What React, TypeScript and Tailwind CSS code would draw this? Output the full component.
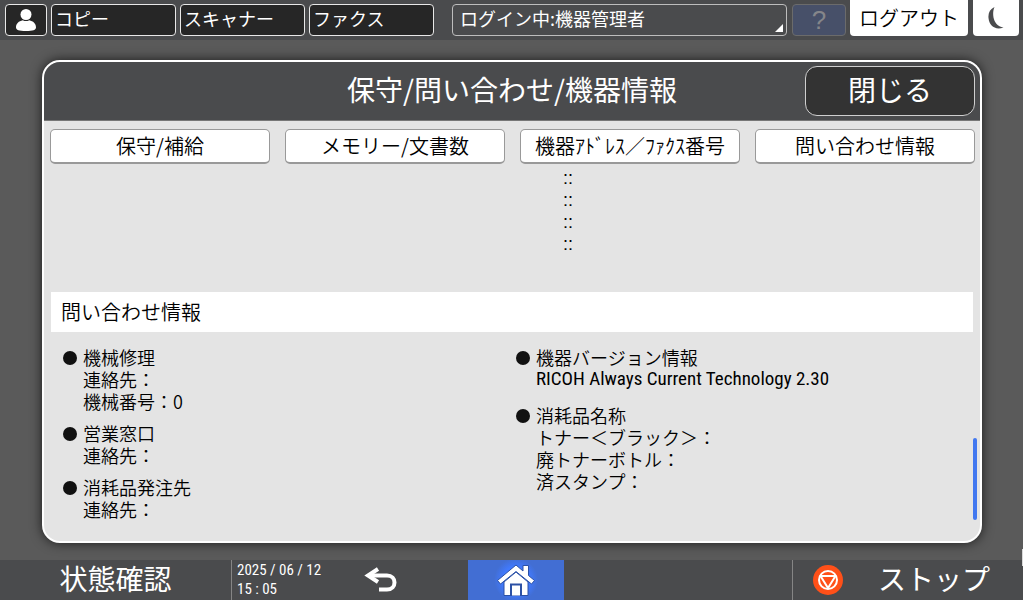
import { useState } from "react";

interface InfoBlock {
  title: string;
  lines: string[];
}

const APPS = ["コピー", "スキャナー", "ファクス"];

const TABS = ["保守/補給", "メモリー/文書数", "機器ｱﾄﾞﾚｽ／ﾌｧｸｽ番号", "問い合わせ情報"];

const CONTACTS: InfoBlock[] = [
  { title: "機械修理", lines: ["連絡先：", "機械番号：0"] },
  { title: "営業窓口", lines: ["連絡先："] },
  { title: "消耗品発注先", lines: ["連絡先："] },
];

const DEVICE: InfoBlock[] = [
  { title: "機器バージョン情報", lines: ["RICOH Always Current Technology 2.30"] },
  { title: "消耗品名称", lines: ["トナー＜ブラック＞：", "廃トナーボトル：", "済スタンプ："] },
];

function InfoList({ blocks, className }: { blocks: InfoBlock[]; className: string }) {
  return (
    <ul className={`flex flex-col ${className}`}>
      {blocks.map((block) => (
        <li key={block.title} className="flex gap-[6px]">
          <span className="mt-[5px] h-[14px] w-[14px] shrink-0 rounded-full bg-[#111111]" />
          <div className="text-[18px] leading-[22px]">
            <h3>{block.title}</h3>
            {block.lines.map((line) => (
              <p key={line} className={line.startsWith("RICOH") ? "font-['Roboto_Condensed',Roboto,sans-serif] text-[19px] font-normal" : ""}>
                {line}
              </p>
            ))}
          </div>
        </li>
      ))}
    </ul>
  );
}

function TopBar() {
  return (
    <header className="flex h-10 shrink-0 items-start bg-[#4a4b4d] pl-[5px] pr-1 text-white">
      <button aria-label="ユーザー" className="mt-1 flex h-8 w-[42px] items-center justify-center rounded border border-[#e8e8e8] bg-[#262626]">
        <svg viewBox="0 0 20 22" className="h-[22px] w-5" fill="currentColor">
          <circle cx="10" cy="5.5" r="5.5" />
          <path d="M0 18.5C0 14.5 2.8 12 6.8 11.2Q10 13 13.2 11.2C17.2 12 20 14.5 20 18.5C20 21 17 22 10 22S0 21 0 18.5Z" />
        </svg>
      </button>
      <nav className="ml-1 mt-1 flex gap-1">
        {APPS.map((app) => (
          <button key={app} className="h-8 w-[125px] rounded border border-[#e8e8e8] bg-[#262626] pb-1 pl-[3px] text-left text-[18px] font-normal leading-[26px]">
            {app}
          </button>
        ))}
      </nav>
      <button className="relative ml-[18px] mt-1 h-8 min-w-0 flex-1 rounded border border-[#bdbdbd] pb-1 pl-[7px] text-left text-[18px] font-normal leading-[26px]">
        ログイン中:機器管理者
        <svg viewBox="0 0 8 8" className="absolute bottom-[3px] right-[3px] h-2 w-2" fill="currentColor">
          <path d="M8 0V8H0Z" />
        </svg>
      </button>
      <button disabled className="ml-[5px] mt-1 h-8 w-[54px] shrink-0 rounded border border-[#6b6b6b] bg-[#475069] font-['Liberation_Sans',sans-serif] text-[26px] font-normal leading-7 text-[#85868a]">
        ?
      </button>
      <button className="ml-1 h-9 w-[118px] shrink-0 rounded-b bg-white text-[20px] leading-9 text-black">ログアウト</button>
      <button aria-label="スリープ" className="ml-[5px] flex h-9 w-[46px] shrink-0 items-center justify-center rounded-b bg-white text-[#4a4b4d]">
        <svg viewBox="0 0 16 22" className="h-[22px] w-4" fill="currentColor">
          <path d="M6.500 0C2 2 0 6 0.500 11C1.200 18.500 7 23.500 15.500 20.500C9.500 19.500 6.500 15.500 5.500 10.500C4.800 6.500 5.200 3 6.500 0Z" />
        </svg>
      </button>
    </header>
  );
}

function BottomBar() {
  return (
    <footer className="relative flex h-10 shrink-0 items-stretch bg-[#4a4b4d] text-white">
      <button className="w-[231px] pb-1 text-[28px] font-normal leading-9">状態確認</button>
      <time className="w-[113px] border-l border-[#858585] pl-[5px] pt-px font-['Roboto_Condensed',Roboto,sans-serif] text-[15px] font-normal leading-[19px]">
        2025 / 06 / 12
        <br />
        15 : 05
      </time>
      <button aria-label="戻る" className="flex w-[73px] items-center justify-center">
        <svg viewBox="0 0 34 26" className="h-[26px] w-[34px]" fill="none" stroke="currentColor" strokeWidth="4">
          <path d="M4 8.500H23C33 8.500 33 22.500 23 22.500H15" />
          <path d="M14 2L4 8.500L14 15" />
        </svg>
      </button>
      <button aria-label="ホーム" className="ml-[51px] flex w-24 items-center justify-center bg-[radial-gradient(circle,#4080ff_0%,#417aff_25%,#426ed3_42%)]">
        <svg viewBox="0 0 38 32" className="h-8 w-[38px]" fill="#fff" stroke="#2c51a5">
          <path d="M7 18L19 8L31 18V31.500H7Z" />
          <path d="M0.500 16.500L19 1L26 7V1.500H31.500V11.500L37.500 16.500L34.500 20L19 7.500L3.500 20Z" />
          <path d="M13 31.500V19.500H25V31.500Z" fill="#2c51a5" stroke="none" />
          <path d="M15 31.500V21.500H23V31.500Z" stroke="none" />
        </svg>
      </button>
      <div className="flex-1" />
      <button className="flex w-[231px] items-center border-l border-[#858585] pl-5 text-[28px] font-normal leading-9">
        <svg viewBox="0 0 30 30" className="h-[30px] w-[30px]" fill="none" stroke="#fff" strokeWidth="2">
          <circle cx="15" cy="15" r="15" fill="#ff5019" stroke="none" />
          <circle cx="15" cy="15" r="9" />
          <path d="M7.500 11H22.500L15 23Z" strokeLinejoin="round" />
        </svg>
        <span className="ml-[35px] pb-1">ストップ</span>
      </button>
      {/* Edge handle */}
      <span className="absolute bottom-[34px] right-0 h-[17px] w-px bg-[#d8d8d8]" />
    </footer>
  );
}

export default function App() {
  const [activeTab, setActiveTab] = useState(TABS[3]);

  return (
    <div className="flex min-h-screen flex-col bg-[#5a5a5a] font-['Noto_Sans_CJK_JP',sans-serif] font-[350] text-black">
      <TopBar />

      <main className="mb-[17px] ml-[42px] mr-[41px] mt-5 flex flex-1 flex-col overflow-hidden rounded-[18px] border-2 border-white bg-[#e4e4e4] shadow-[0_0_12px_rgba(0,0,0,0.7)]">
        {/* Title row */}
        <div className="grid h-[59px] grid-cols-[1fr_auto_1fr] items-center border-b border-[#777777] bg-[#4a4b4d] px-[5px] font-normal text-white">
          <h1 className="col-start-2 pb-1 text-[28px] leading-9">保守/問い合わせ/機器情報</h1>
          <button className="h-[50px] w-[170px] justify-self-end rounded-xl border border-[#cfcfcf] bg-[#333333] pb-1 text-[28px] leading-9">閉じる</button>
        </div>

        {/* Section shortcuts */}
        <nav className="flex justify-between pl-[6px] pr-[5px] pt-2">
          {TABS.map((tab) => (
            <button
              key={tab}
              aria-pressed={tab === activeTab}
              onClick={() => setActiveTab(tab)}
              className="h-[35px] w-[220px] rounded-[5px] border border-b-2 border-[#999999] bg-white text-[20px] leading-8"
            >
              {tab}
            </button>
          ))}
        </nav>

        <div className="relative flex-1 px-[7px]">
          {/* Tail of the address list above */}
          <div className="grid h-32 grid-cols-2 overflow-hidden pt-[3px] font-['Liberation_Sans',sans-serif] text-[18px] leading-[22px]">
            <div className="col-start-2 pl-[51px]">
              <p>::</p>
              <p>::</p>
              <p>::</p>
              <p>::</p>
            </div>
          </div>
          <h2 className="bg-white pl-[10px] text-[20px] leading-10">問い合わせ情報</h2>
          <div className="grid grid-cols-2 pl-3 pr-1 pt-[14px]">
            <InfoList blocks={CONTACTS} className="gap-[10px]" />
            <InfoList blocks={DEVICE} className="gap-[14px]" />
          </div>
          <div className="absolute bottom-[21px] right-[3px] h-[82px] w-1 rounded-full bg-[#4278f0]" />
        </div>
      </main>

      <BottomBar />
    </div>
  );
}
